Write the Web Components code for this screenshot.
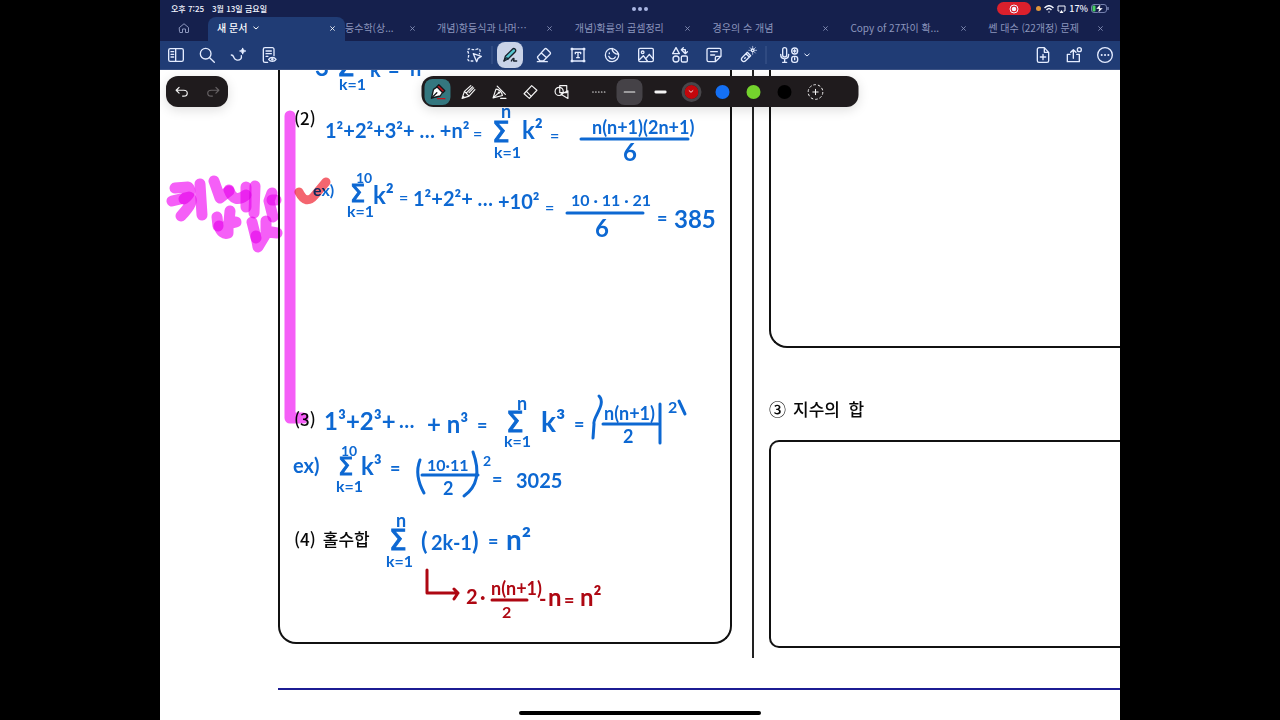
<!DOCTYPE html>
<html lang="ko">
<head>
<meta charset="utf-8">
<meta name="viewport" content="width=device-width, initial-scale=1">
<title>새 문서</title>
<style>
  body { margin: 0; background: #000; font-family: "Noto Sans CJK KR", sans-serif; }
</style>
</head>
<body>
<note-app></note-app>
<script>
const ICONS = {
  home: '<path d="M3 11 12 3.500l9 7.500v9a1 1 0 0 1-1 1h-5v-7H9v7H4a1 1 0 0 1-1-1z"/>',
  down: '<path d="m3 8 9 8 9-8"/>',
  close: '<path d="m3 3 18 18M21 3 3 21"/>',
  sidebar: '<rect x="1" y="2.500" width="22" height="19" rx="2.500"/><path d="M11.500 2.500v19M4.500 7h4M4.500 11h4M4.500 15h4"/>',
  search: '<circle cx="10" cy="10" r="8"/><path d="m16 16 7 7"/>',
  spark: '<path d="M2 12c3 0 3 1.500 4 4 1.500 4 7 5 10 2 1.300-1.400 1.500-3 1-5M19 2v8M15 6h8"/><path d="m17.500 4.500 3 3m0-3-3 3"/>',
  pageView: '<path d="M10 23H6a2.500 2.500 0 0 1-2.500-2.500v-17A2.500 2.500 0 0 1 6 1h11a2.500 2.500 0 0 1 2.500 2.500V13M7.500 6h8M7.500 10h8M7.500 14h3"/><path d="M11.500 18.500c2.500-4 8.500-4 11 0-2.500 4-8.500 4-11 0z"/><circle cx="17" cy="18.500" r="1"/>',
  lasso: '<path stroke-linecap="butt" stroke-dasharray="4 2" d="M11 21H5a3 3 0 0 1-2-4q2-5 0-10Q1 2 7 3q5 2 10 0 5-1 4 4l-1 4"/><path d="m11 10 12 4-5 3-2 5z"/>',
  pen: '<path fill="#55c5cf" stroke="#17202c" d="m5 14 11-11c2-2 6 1 4 4L9 18l-6 3z"/><path stroke="#17202c" d="M3 21c3-5 4-6 6-3M14 21c2-4 4-5 4-3s-2 3 0 3h4"/>',
  eraser: '<path d="m3 14 10-11c1-1 2-1 3 0l5 5c1 1 1 2 0 3L11 21H6l-3-4c-1-1-1-2 0-3zM8 9l8 7M2 22h15"/>',
  textBox: '<path d="M3 3h18v18H3zM8 10V8h8v2M12 8v8M10 16h4"/><path fill="#fff" d="M2 2h2v2H2zm18 0h2v2h-2zm0 18h2v2h-2zM2 20h2v2H2z"/>',
  sticker: '<path d="M22 11A10 10 0 1 1 12 2c0 5 4 9 10 9zM12 2c4 1 8 4 10 9M7 14c2 5 8 5 10 1M8 9v1"/>',
  image: '<rect x="1" y="2" width="22" height="20" rx="2"/><circle cx="7" cy="8" r="2"/><path d="m2 19 6-6 6 8M12 17l5-6 5 6"/>',
  elements: '<path d="m6 1 5 9H1zM14 4h6v4M17 1l-3 3 3 3M17 7l3 3 3-3"/><circle cx="6" cy="18" r="4.500"/><rect x="14" y="13.500" width="9" height="9" rx="2"/>',
  sticky: '<path d="M14 22H4a2.500 2.500 0 0 1-2.500-2.500v-15A2.500 2.500 0 0 1 4 2h16a2.500 2.500 0 0 1 2.500 2.500V14zM14 22v-6a2 2 0 0 1 2-2h6.500M7 7h10M7 12h6"/>',
  laser: '<path d="m3 16 8-8 5 5-8 8c-3 3-8-2-5-5zM9 10l5 5M7 17l1-1"/><circle cx="19" cy="5" r="2"/><path stroke-width="1" d="M19 -1v3M25 5h-3M13 5h3M19 11V8M15 1l2 2M23 1l-2 2M23 9l-2-2"/>',
  mic: '<rect x="4" y="1" width="6" height="14" rx="3"/><path d="M1 11c0 9 12 9 12 0M7 18v5M4 23h6"/><circle cx="22" cy="6" r="4.500"/><path d="M20 6h4M22 4v4"/><rect x="17.500" y="14" width="9" height="9" rx="3.500"/><path d="M22 16v3"/>',
  addPage: '<path d="M14 1H6a2.500 2.500 0 0 0-2.500 2.500v17A2.500 2.500 0 0 0 6 23h12a2.500 2.500 0 0 0 2.500-2.500V8zM14 1v7h6.500M12 11v8M8 15h8"/>',
  share: '<path d="M6 11H2v11h18V11h-4M11 17V4M7 8l4-4 4 4"/><circle cx="20" cy="4" r="3"/>',
  more: '<circle cx="12" cy="12" r="11"/><path stroke-width="3" d="M7 12h.1M12 12h.1M17 12h.1"/>',
  undo: '<path d="M7 4 2 9l5 5M2 9h13c8 0 8 10 0 10h-2"/>',
  redo: '<path d="m17 4 5 5-5 5M22 9H9C1 9 1 19 9 19h2"/>',
  fountain: '<path fill="#fff" stroke="#15191c" d="m3 21 3-13 6-4 8 8-4 6z"/><path stroke="#15191c" d="m3 21 8-8"/><path fill="#c3141d" stroke="#15191c" d="m11 4 3-3 9 9-3 3z"/><path stroke="#c3141d" d="M12 22h11"/>',
  ballpen: '<path d="M1 23 5 11 16 1M1 23l12-4L23 8M5 11l8 8M8 14 19 3M13 13l8-8M1 23l3-3"/>',
  brush: '<path d="m1 22 5-15c5 0 10 5 11 11L1 22l10-9M8 2l14 14M14 23h9"/><circle cx="11" cy="13" r="1"/>',
  marker: '<path d="M1 15 14 1l9 8L10 23z"/><path d="m5 11 8 8"/>',
  shapes: '<circle cx="8" cy="11" r="7"/><path d="M9 1h12v12H9zM11 16l12-6v13z"/>',
  dots: '<path stroke-dasharray="1 4" d="M2 12h21"/>',
  thin: '<path d="M3 12h18"/>',
  thick: '<path stroke-width="5" d="M4 12h16"/>',
  addColor: '<circle cx="12" cy="12" r="11" stroke-linecap="butt" stroke-dasharray="4 2.900"/><path d="M12 8v8M8 12h8"/>'
};

const define = (tag, css, html) => customElements.define(tag, class extends HTMLElement {
  connectedCallback() {
    if (this.shadowRoot) return;
    const root = this.attachShadow({ mode: "open" });
    root.innerHTML = `<style>:host{box-sizing:border-box}*{box-sizing:border-box}${css}</style>${typeof html === "function" ? html(this) : html}`;
  }
});

define("ui-icon", `
  :host { display: block; width: var(--icon, 16px); height: var(--icon, 16px); flex: none; }
  svg { display: block; width: 100%; height: 100%; overflow: visible; fill: none; stroke: currentColor;
        stroke-width: var(--stroke, 2); stroke-linecap: round; stroke-linejoin: round; }`,
  el => `<svg viewBox="0 0 24 24" aria-hidden="true">${ICONS[el.getAttribute("name")]}</svg>`);

define("tool-button", `
  :host { display: flex; justify-content: center; align-items: center; width: var(--cell, 31px); height: 100%; }
  button { display: grid; place-items: center; width: 26px; height: 26px; padding: 0; border: 0; border-radius: 8px;
           background: none; color: inherit; }
  :host([selected]) button { background: var(--selected, #c9d3e8); }`,
  el => `<button aria-label="${el.getAttribute("label")}" aria-pressed="${el.hasAttribute("selected")}"><ui-icon name="${el.getAttribute("icon")}"></ui-icon></button>`);

define("color-swatch", `
  :host { display: grid; place-items: center; width: 31px; height: 100%; }
  button { display: grid; place-items: center; width: 20px; height: 20px; padding: 0; border: 3px solid transparent; border-radius: 50%;
           background: var(--swatch) padding-box; color: #fff; --icon: 5px; --stroke: 4; }
  :host([selected]) button { border-color: #48464a; }`,
  el => `<button aria-label="${el.getAttribute("label")}">${el.hasAttribute("selected") ? '<ui-icon name="down"></ui-icon>' : ""}</button>`);

define("status-bar", `
  :host { display: grid; grid-template-columns: 1fr auto 1fr; align-items: center; height: 17px; padding: 0 11px;
          color: #f3f5ff; font-size: 8px; line-height: 16px; font-weight: 500; }
  .time { display: flex; gap: 8px; }
  .dots { display: flex; gap: 2px; }
  .dots i { width: 4px; height: 4px; border-radius: 50%; background: #a9b5e2; }
  .state { display: flex; justify-content: flex-end; align-items: center; gap: 3px; }
  .rec { display: grid; place-items: center; width: 34px; height: 13px; border-radius: 7px; background: #db202c; margin-right: 2px; }
  .mic { width: 5px; height: 5px; border-radius: 50%; background: #df963a; }
  svg { display: block; fill: none; stroke: #f3f5ff; stroke-width: 1.500; }
  .percent { font-size: 9px; }`, `
  <div class="time"><span>오후 7:25</span><span>3월 13일 금요일</span></div>
  <div class="dots"><i></i><i></i><i></i></div>
  <div class="state">
    <span class="rec"><svg width="10" height="10" viewBox="0 0 10 10"><circle cx="5" cy="5" r="4" stroke-width="1"/><circle cx="5" cy="5" r="1.500" fill="#fff"/></svg></span>
    <i class="mic"></i>
    <svg width="10" height="8" viewBox="0 0 10 8"><path d="M.5 3c3-3 6-3 9 0M2.500 5c2-2 3-2 5 0M4.500 7h1"/></svg>
    <svg width="9" height="8" viewBox="0 0 9 8"><path stroke-width="1" d="M2.500 6H1V1h7v5H6.500"/><path fill="#fff" stroke="none" d="m2.500 8 2-3 2 3z"/></svg>
    <span class="percent">17%</span>
    <svg width="18" height="9" viewBox="0 0 18 9"><rect x=".5" y=".5" width="15" height="8" rx="2.500" stroke="#7480ae" stroke-width="1"/><path d="M17 3v3" stroke="#7480ae"/><rect x="1.500" y="1.500" width="3" height="6" rx="1" fill="#48cf62" stroke="none"/><path d="M9.500 0 5 5h3L7 9l5-5H9z" fill="#fff" stroke="#16214d" stroke-width=".4"/></svg>
  </div>`);

define("doc-tab", `
  :host { display: flex; align-items: center; flex: 1 1 0; min-width: 0; height: 24px; padding: 0 4px 2px 13px; color: #8c96bd; }
  :host([active]) { position: relative; flex: 0 0 137px; padding: 0 5px 2px 9px; border-radius: 8px 8px 0 0; background: #203c75; color: #fff; }
  :host([tucked]) { flex: 0 0 79px; padding-left: 0; }
  button { padding: 0; border: 0; background: none; color: inherit; font: inherit; }
  .title { display: flex; align-items: center; gap: 6px; flex: 1; min-width: 0; white-space: nowrap; --icon: 6px; --stroke: 4; font-size: 10px; line-height: 16px; }
  :host([active]) .title { font-weight: 500; }
  .close { display: grid; place-items: center; width: 16px; height: 16px; --icon: 5px; --stroke: 4; }`,
  el => `<button class="title"><slot></slot>${el.hasAttribute("active") ? '<ui-icon name="down"></ui-icon>' : ""}</button>
  <button class="close" aria-label="탭 닫기"><ui-icon name="close"></ui-icon></button>`);

define("tab-bar", `
  :host { display: flex; height: 24px; padding-right: 7px; color: #8c96bd; }
  .home { width: 48px; padding: 0 0 2px; border: 0; background: none; color: inherit; display: grid; place-items: center; --icon: 12px; }`, `
  <button class="home" aria-label="홈"><ui-icon name="home"></ui-icon></button>
  <doc-tab active>새 문서</doc-tab>
  <doc-tab tucked>등수학(상...</doc-tab>
  <doc-tab>개념)항등식과 나머⋯</doc-tab>
  <doc-tab>개념)확률의 곱셈정리</doc-tab>
  <doc-tab>경우의 수 개념</doc-tab>
  <doc-tab>Copy of 27자이 확...</doc-tab>
  <doc-tab>쎈 대수 (22개정) 문제</doc-tab>`);

define("main-toolbar", `
  :host { display: grid; grid-template-columns: 1fr auto 1fr; height: 29px; background: #203c75; border-bottom: 1px solid #3a5183; color: #e4ecff; }
  div { display: flex; align-items: center; height: 100%; }
  .tools { --cell: 34px; }
  .end { justify-content: flex-end; }
  .rule { width: 2px; height: 18px; background: #2f4a81; }
  .voice { display: flex; align-items: center; justify-content: center; gap: 8px; width: 56px; height: 28px; padding: 0; border: 0; background: none; color: inherit; }
  .small { --icon: 6px; --stroke: 4; }`, `
  <div><tool-button icon="sidebar" label="사이드바"></tool-button><tool-button icon="search" label="검색"></tool-button><tool-button icon="spark" label="AI"></tool-button><tool-button icon="pageView" label="페이지 보기"></tool-button></div>
  <div class="tools"><tool-button icon="lasso" label="올가미"></tool-button><span class="rule"></span><tool-button selected icon="pen" label="펜"></tool-button><tool-button icon="eraser" label="지우개"></tool-button><tool-button icon="textBox" label="텍스트"></tool-button><tool-button icon="sticker" label="스티커"></tool-button><tool-button icon="image" label="이미지"></tool-button><tool-button icon="elements" label="요소"></tool-button><tool-button icon="sticky" label="메모"></tool-button><tool-button icon="laser" label="레이저"></tool-button><span class="rule"></span><button class="voice" aria-label="녹음"><ui-icon name="mic"></ui-icon><ui-icon class="small" name="down"></ui-icon></button></div>
  <div class="end"><tool-button icon="addPage" label="페이지 추가"></tool-button><tool-button icon="share" label="공유"></tool-button><tool-button icon="more" label="더 보기"></tool-button></div>`);

define("pen-palette", `
  :host { display: flex; height: 31px; border-radius: 12px; background: #1f1b1d; color: #f4f4f4; box-shadow: 0 3px 12px #0002; --icon: 14px; }
  .gap { width: 6px; }
  [icon=dots] { --stroke: 2; }
  [icon=fountain] { --selected: #34777f; --icon: 16px; }
  [icon=thin] { --selected: #454247; }
  [icon=addColor] { --icon: 16px; --stroke: 1.500; margin-right: 28px; }`, `
  <tool-button selected icon="fountain" label="만년필"></tool-button><tool-button icon="ballpen" label="볼펜"></tool-button><tool-button icon="brush" label="브러시"></tool-button><tool-button icon="marker" label="형광펜"></tool-button><tool-button icon="shapes" label="도형"></tool-button>
  <span class="gap"></span>
  <tool-button icon="dots" label="점선"></tool-button><tool-button selected icon="thin" label="가는 선"></tool-button><tool-button icon="thick" label="굵은 선"></tool-button>
  <color-swatch selected label="빨강" style="--swatch:#c4060b"></color-swatch><color-swatch label="파랑" style="--swatch:#1470f5"></color-swatch><color-swatch label="초록" style="--swatch:#74d32d"></color-swatch><color-swatch label="검정" style="--swatch:#000"></color-swatch>
  <tool-button icon="addColor" label="색상 추가"></tool-button>`);

define("history-pill", `
  :host { display: flex; height: 31px; border-radius: 12px; background: #1f1b1d; color: #f4f4f4; box-shadow: 0 3px 12px #0002; --icon: 14px; }
  [icon=redo] { color: #666264; }`, `
  <tool-button icon="undo" label="실행 취소"></tool-button><tool-button icon="redo" label="다시 실행"></tool-button>`);

define("printed-page", `
  :host { display: grid; grid-template-columns: 454px 37px 1fr; padding-left: 118px; color: #080808; font-size: 17px; line-height: 20px; font-weight: 500; }
  p { margin: 0; }
  .left { height: 574px; padding: 38px 14px 0; border: 2px solid #111; border-top: 0; border-radius: 0 0 18px 18px; }
  .second { padding-bottom: 281px; }
  .third { padding-bottom: 100px; }
  .left p, .right p { display: flex; gap: 7px; }
  .gutter { width: 2px; height: 588px; margin-left: 20px; background: #222; }
  .right { display: flex; flex-direction: column; }
  .box { border: 2px solid #111; border-right: 0; }
  .upper { height: 278px; border-top: 0; border-radius: 0 0 0 18px; }
  .lower { height: 208px; border-radius: 10px 0 0 10px; }
  .right p { padding: 51px 0 21px; }
  hr { grid-column: 1 / -1; width: 100%; height: 2px; margin: 30px 0 0; border: 0; background: #1c1c93; }`, `
  <section class="left"><p class="second">(2)</p><p class="third">(3)</p><p><span>(4)</span><span>홀수합</span></p></section>
  <div class="gutter"></div>
  <section class="right"><div class="box upper"></div><p><span>③</span><span>지수의&ensp;합</span></p><div class="box lower"></div></section>
  <hr>`);

/* Handwritten marks sit freely on the canvas: [x, baseline, size, text]. */
const BLUE = [
  [315,76,24,"3"],[337,76,28,"Σ"],[339,90,16,"k=1"],[370,77,20,"k"],[388,77,20,"="],[410,76,20,"n"],
  [325,138,20,"1²+2²+3²+ … +n²"],[473,139,16,"="],
  [492,142,28,"Σ"],[501,118,18,"n"],[494,158,16,"k=1"],[522,139,24,"k²"],[550,141,16,"="],[592,134,18,"n(n+1)(2n+1)"],[623,161,24,"6"],
  [313,196,16,"ex)"],[356,183,14,"10"],[350,202,24,"Σ"],[347,217,16,"k=1"],[373,204,24,"k²"],[399,203,16,"="],[413,206,20,"1²+2²+ …"],[498,209,20,"+10²"],[545,213,16,"="],
  [571,206,16,"10 · 11 · 21"],[595,237,24,"6"],[657,225,18,"="],[674,228,24,"385"],
  [324,430,24,"1³+2³+"],[399,428,20,"…"],[427,433,24,"+ n³"],[477,432,18,"="],
  [506,432,28,"Σ"],[517,410,18,"n"],[504,447,16,"k=1"],[541,432,28,"k³"],[574,431,18,"="],[604,420,18,"n(n+1)"],[623,443,18,"2"],[668,413,16,"2"],
  [293,473,20,"ex)"],[338,475,24,"Σ"],[341,456,14,"10"],[336,492,16,"k=1"],[361,475,24,"k³"],[390,475,18,"="],[427,471,16,"10·11"],[443,495,18,"2"],[483,466,14,"2"],[492,486,18,"="],[516,488,20,"3025"],
  [396,527,18,"n"],[389,550,28,"Σ"],[386,567,16,"k=1"],[421,550,24,"("],[431,550,20,"2k-1"],[472,550,24,")"],[488,548,18,"="],[506,550,28,"n²"]
];
const RED = [[466,604,20,"2"],[480,604,20,"·"],[491,595,18,"n(n+1)"],[502,618,16,"2"],[539,606,20,"-"],[548,606,24,"n"],[564,607,18,"="],[580,606,24,"n²"]];
const write = list => list.map(([x, y, size, text]) =>
  `<text${text === "Σ" ? ' class="sum"' : ""} x="${x}" y="${y}" font-size="${size}">${text}</text>`).join("");

define("ink-layer", `
  :host { display: block; width: 960px; height: 650px; pointer-events: none; mix-blend-mode: multiply; }
  svg { display: block; overflow: visible; font-family: Lato, sans-serif; font-weight: 700; }
  .sum { font-family: "DejaVu Sans", sans-serif; font-weight: 400; stroke: #0d68d2; stroke-width: 1; }
  .line { fill: none; stroke-width: 3; stroke-linecap: round; stroke-linejoin: round; }
  .words { mix-blend-mode: multiply; }
  .glow path { fill: none; stroke: #f55ff7; stroke-width: 11; stroke-linecap: round; stroke-linejoin: round; mix-blend-mode: multiply; }
  .glow .check { stroke: #f4656f; stroke-width: 9; }`, `
  <svg width="960" height="650" viewBox="160 70 960 650">
    <g class="glow">
      <path d="M290 116V418H303"/>
      <path d="M175 188 188 187Q193 192 184 199"/><path d="M172 201 189 197Q196 200 181 216"/><path d="M200 184 202 215"/>
      <path d="M214 181 220 198 229 191"/><path d="M229 190Q234 204 246 195"/><path d="M246 187V207"/>
      <path d="M255 186 254 213"/><path d="M272 200 276 200"/><path d="M272 193 269 201 273 217"/>
      <path d="M217 217 218 226"/><path d="M230 211 229 222H236L228 224V233Q222 235 219 226"/>
      <path d="M252 222 256 238"/><path d="M266 221V231L277 233 267 232 258 247 256 236"/>
      <path class="check" d="M299 192Q306 206 315 195L326 182"/>
    </g>
    <g class="line" stroke="#0d68d2">
      <path d="M581 139H688M567 213H643M603 424H658M422 475H478"/>
      <path d="M599 396C607 404 592 418 594 424L593 438M660 404V443M679 401 685 414"/>
      <path d="M420 460Q414 475 424 493M473 452Q484 482 464 496"/>
    </g>
    <g class="words" fill="#0d68d2">${write(BLUE)}</g>
    <path class="line" stroke="#ae0712" d="M427 570V593H458M454 589 458 593 454 599M492 600H527"/>
    <g fill="#ae0712">${write(RED)}</g>
  </svg>`);

define("note-canvas", `
  :host { display: block; position: relative; overflow: hidden; background: #fff; isolation: isolate; }
  ink-layer { position: absolute; left: 0; top: 0; }
  history-pill { position: absolute; left: 6px; top: 6px; }
  pen-palette { position: absolute; left: 50%; top: 6px; transform: translateX(-50%); }
  .handle { position: absolute; left: 50%; bottom: 5px; width: 242px; height: 4px; border-radius: 2px; background: #000; transform: translateX(-50%); }`, `
  <printed-page></printed-page><ink-layer></ink-layer><history-pill></history-pill><pen-palette></pen-palette><div class="handle"></div>`);

define("note-app", `
  :host { display: flex; flex-direction: column; min-height: 100vh; margin: 0 12.5%; background: #15204d; }
  note-canvas { flex: 1; }`, `
  <status-bar></status-bar><tab-bar></tab-bar><main-toolbar></main-toolbar><note-canvas></note-canvas>`);
</script>
</body>
</html>
